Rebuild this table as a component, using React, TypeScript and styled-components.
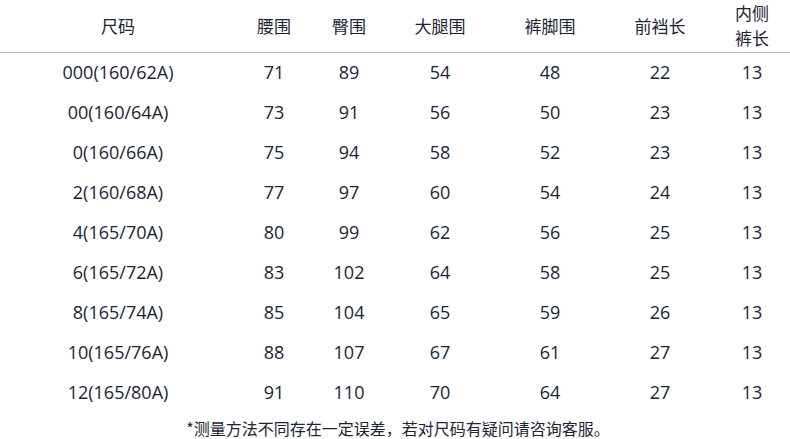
import React from "react";
import styled, { createGlobalStyle } from "styled-components";

const GlobalStyle = createGlobalStyle`
  html, body {
    margin: 0;
    padding: 0;
    background: #ffffff;
  }
  body {
    font-family: "Open Sans", "Noto Sans CJK SC", sans-serif;
    color: #1b2339;
  }
`;

const COLS = "236px 76px 74px 108px 112px 108px 76px";

const Page = styled.div`
  width: 790px;
  height: 439px;
  overflow: hidden;
  background: #ffffff;
`;

const HeaderRow = styled.div`
  display: grid;
  grid-template-columns: ${COLS};
  height: 52px;
  border-bottom: 1px solid #b6b6bc;
`;

const HeadCell = styled.div`
  display: flex;
  align-items: center;
  justify-content: center;
  text-align: center;
  font-family: "Noto Sans CJK SC", sans-serif;
  font-size: 17px;
  line-height: 25px;
  padding-bottom: 2px;
`;

const Row = styled.div`
  display: grid;
  grid-template-columns: ${COLS};
  height: 40px;
`;

const Cell = styled.div`
  display: flex;
  align-items: center;
  justify-content: center;
  font-size: 18px;
  padding-bottom: 3px;
`;

const Note = styled.div`
  padding-top: 6px;
  text-align: center;
  font-family: "Noto Sans CJK SC", sans-serif;
  font-size: 16px;
  line-height: 18px;
  padding-left: 6px;
`;

const headers = ["尺码", "腰围", "臀围", "大腿围", "裤脚围", "前裆长", "内侧\n裤长"];

const rows: (string | number)[][] = [
  ["000(160/62A)", 71, 89, 54, 48, 22, 13],
  ["00(160/64A)", 73, 91, 56, 50, 23, 13],
  ["0(160/66A)", 75, 94, 58, 52, 23, 13],
  ["2(160/68A)", 77, 97, 60, 54, 24, 13],
  ["4(165/70A)", 80, 99, 62, 56, 25, 13],
  ["6(165/72A)", 83, 102, 64, 58, 25, 13],
  ["8(165/74A)", 85, 104, 65, 59, 26, 13],
  ["10(165/76A)", 88, 107, 67, 61, 27, 13],
  ["12(165/80A)", 91, 110, 70, 64, 27, 13],
];

const App = () => {
  return (
    <>
      <GlobalStyle />
      <Page>
        <HeaderRow>
          {headers.map((h, i) => (
            <HeadCell key={i}>
              <span>
                {h.split("\n").map((line, j) => (
                  <div key={j}>{line}</div>
                ))}
              </span>
            </HeadCell>
          ))}
        </HeaderRow>
        {rows.map((r, i) => (
          <Row key={i}>
            {r.map((v, j) => (
              <Cell key={j}>{v}</Cell>
            ))}
          </Row>
        ))}
        <Note>*测量方法不同存在一定误差，若对尺码有疑问请咨询客服。</Note>
      </Page>
    </>
  );
};

export default App;
